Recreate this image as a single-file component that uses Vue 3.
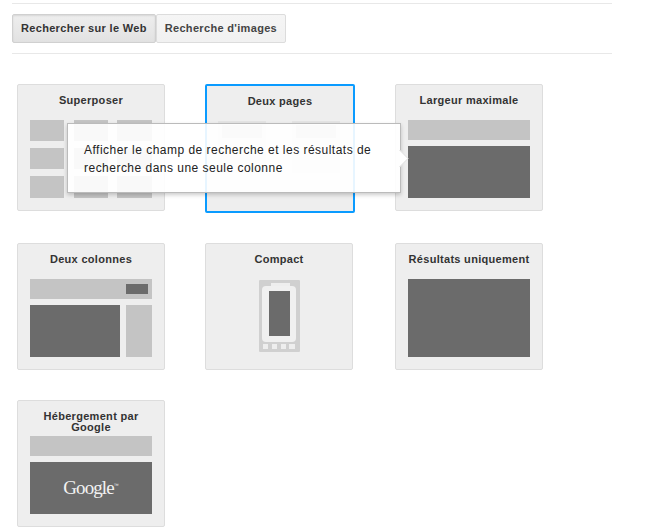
<script setup>
const tip = "Afficher le champ de recherche et les résultats de recherche dans une seule colonne"
</script>

<template>
  <div class="page">
    <div class="tabs">
      <button class="tab on">Rechercher sur le Web</button>
      <button class="tab">Recherche d'images</button>
    </div>
    <div class="grid">
      <div class="card">
        <div class="title">Superposer</div>
        <div class="thumb three">
          <i class="l" v-for="n in 9" :key="n"></i>
        </div>
      </div>
      <div class="card sel">
        <div class="title">Deux pages</div>
        <div class="thumb pages">
          <div class="sheet"><i class="l inner"></i></div>
          <div class="sheet"><i class="l inner"></i></div>
        </div>
      </div>
      <div class="card">
        <div class="title">Largeur maximale</div>
        <div class="thumb stack">
          <i class="l bar"></i>
          <i class="d main"></i>
        </div>
      </div>
      <div class="card">
        <div class="title">Deux colonnes</div>
        <div class="thumb stack">
          <div class="l bar head"><i class="d mini"></i></div>
          <div class="cols">
            <i class="d wide"></i>
            <i class="l side"></i>
          </div>
        </div>
      </div>
      <div class="card">
        <div class="title">Compact</div>
        <div class="phone">
          <svg width="42" height="72" viewBox="0 0 42 72">
            <rect x="0" y="0" width="41" height="72" rx="1" fill="#d0d0d0" />
            <rect x="12" y="3" width="19" height="3" fill="#eeeeee" />
            <rect x="3" y="6" width="34" height="56" rx="4" fill="#f0f0f0" />
            <rect x="10" y="11" width="21" height="45" fill="#6b6b6b" />
            <rect x="4" y="64" width="5" height="5" fill="#eeeeee" />
            <rect x="13" y="64" width="5" height="5" fill="#eeeeee" />
            <rect x="22" y="64" width="5" height="5" fill="#eeeeee" />
            <rect x="30" y="64" width="6" height="5" fill="#eeeeee" />
          </svg>
        </div>
      </div>
      <div class="card">
        <div class="title">Résultats uniquement</div>
        <div class="thumb"><i class="d full"></i></div>
      </div>
      <div class="card">
        <div class="title">Hébergement par Google</div>
        <div class="thumb stack">
          <i class="l bar"></i>
          <div class="d main logo"><span class="word">Google</span><span class="tm">™</span></div>
        </div>
      </div>
    </div>
    <div class="tip">
      {{ tip }}
      <svg class="arrow" width="10" height="20" viewBox="0 0 10 20">
        <path d="M1 1 L9 9.500 L1 18 Z" fill="#ffffff" />
        <path d="M0.500 1 L9 9.500 L0.500 18" fill="none" stroke="#dddddd" stroke-width="1" />
      </svg>
    </div>
  </div>
</template>

<style scoped>
.page {
  position: relative;
  box-sizing: border-box;
  width: 646px;
  height: 532px;
  padding-top: 3px;
  overflow: hidden;
  font-family: "Liberation Sans", Arial, sans-serif;
  color: #333;
}
.tabs {
  display: flex;
  box-sizing: content-box;
  width: 600px;
  height: 38px;
  margin-left: 12px;
  padding-top: 11px;
  border-top: 1px solid #e8e8e8;
  border-bottom: 1px solid #e8e8e8;
}
.tab {
  box-sizing: border-box;
  height: 29px;
  margin: -1px 0 0;
  padding: 0 8px 2px;
  border: 1px solid #dcdcdc;
  border-radius: 2px;
  background: linear-gradient(#f5f5f5, #f1f1f1);
  color: #444;
  font: bold 11px "Liberation Sans", Arial, sans-serif;
  letter-spacing: 0.32px;
}
.tab.on {
  background: linear-gradient(#eeeeee, #e2e2e2);
  border-color: #d0d0d0;
  box-shadow: inset 0 1px 2px rgba(0, 0, 0, 0.1);
  color: #333;
}
.grid {
  display: grid;
  grid-template-columns: 188px 190px 148px;
  row-gap: 30px;
  align-items: start;
  margin: 30px 0 0 17px;
}
.card {
  box-sizing: border-box;
  width: 148px;
  height: 127px;
  border: 1px solid #dddddd;
  border-radius: 2px;
  background: #eeeeee;
}
.card.sel {
  width: 150px;
  height: 129px;
  border: 2px solid #0a9bff;
}
.title {
  box-sizing: border-box;
  height: 35px;
  padding: 10px 12px 0;
  color: #333;
  font-size: 11px;
  font-weight: bold;
  line-height: 11px;
  letter-spacing: 0.3px;
  text-align: center;
}
.thumb {
  width: 122px;
  margin-left: 12px;
}
.l, .d { display: block; }
.l { background: #c4c4c4; }
.d { background: #6b6b6b; }
.three {
  display: grid;
  grid-template-columns: 34px 34px 35px;
  grid-template-rows: 21px 21px 22px;
  column-gap: 9.5px;
  row-gap: 7px;
}
.pages {
  display: flex;
  gap: 26px;
  margin-left: 11px;
}
.sheet {
  width: 50px;
  height: 52px;
  padding: 4px;
  box-sizing: border-box;
  background: #e4e4e4;
}
.inner { height: 13px; background: #c8c8c8; }
.stack {
  display: flex;
  flex-direction: column;
  gap: 6px;
}
.bar { height: 20px; }
.main { height: 52px; }
.head {
  display: flex;
  justify-content: flex-end;
  align-items: center;
  padding-right: 4px;
}
.mini { width: 22px; height: 10px; }
.cols {
  display: flex;
  justify-content: space-between;
}
.wide { width: 90px; height: 52px; }
.side { width: 26px; height: 52px; }
.phone {
  padding: 1px 0 0 53px;
}
.phone svg { display: block; }
.full { height: 78px; }
.logo {
  display: flex;
  justify-content: center;
  align-items: center;
  color: #f2f2f2;
}
.word {
  font-family: "Liberation Serif", serif;
  font-size: 19px;
  letter-spacing: -0.9px;
}
.tm {
  align-self: flex-start;
  margin-top: 20px;
  font-size: 5px;
}
.tip {
  position: absolute;
  left: 67px;
  top: 123px;
  box-sizing: border-box;
  width: 334px;
  height: 70px;
  padding: 17px 16px 0;
  border: 1px solid #bbbbbb;
  background: rgba(255, 255, 255, 0.9);
  box-shadow: 0 2px 4px rgba(0, 0, 0, 0.2);
  color: #222;
  font-size: 12px;
  line-height: 18.2px;
  letter-spacing: 0.48px;
}
.arrow {
  position: absolute;
  left: 331px;
  top: 25px;
}
</style>
